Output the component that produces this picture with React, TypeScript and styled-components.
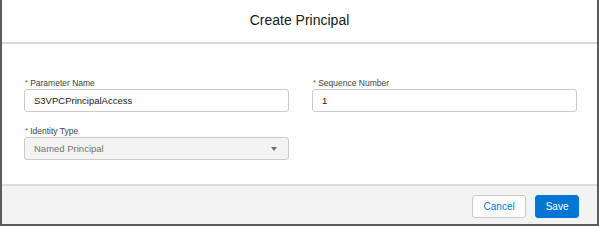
import React from 'react'
import styled, { createGlobalStyle } from 'styled-components'

const GlobalStyle = createGlobalStyle`
  html, body {
    margin: 0;
    padding: 0;
    background: #ffffff;
  }
  body {
    font-family: 'Liberation Sans', Arial, sans-serif;
    color: #181818;
  }
`

const Modal = styled.div`
  box-sizing: border-box;
  width: 599px;
  height: 226px;
  display: flex;
  flex-direction: column;
  background: #ffffff;
  border-left: 2px solid #5b5b5b;
  border-right: 2px solid #5b5b5b;
  border-bottom: 2px solid #5b5b5b;
`

const Header = styled.header`
  box-sizing: border-box;
  height: 44px;
  display: flex;
  align-items: center;
  justify-content: center;
  padding-bottom: 2px;
  border-bottom: 2px solid #d6d6d6;
`

const Title = styled.h2`
  margin: 0;
  font-size: 14px;
  font-weight: 400;
  color: #181818;
`

const Body = styled.div`
  flex: 1;
  display: grid;
  grid-template-columns: 265px 265px;
  column-gap: 23px;
  row-gap: 12px;
  align-content: start;
  padding: 32px 0 0 22px;
`

const Field = styled.div`
  display: flex;
  flex-direction: column;
`

const Label = styled.label`
  display: flex;
  align-items: center;
  height: 13px;
  font-size: 8.5px;
  color: #3e3e3c;
`

const Required = styled.abbr`
  color: #c23934;
  text-decoration: none;
  margin: 0 2px 0 1px;
  font-size: 8px;
`

const Input = styled.div<{ disabled?: boolean }>`
  box-sizing: border-box;
  height: 23px;
  display: flex;
  align-items: center;
  justify-content: space-between;
  padding: 0 11px 0 9px;
  border: 1px solid #c9c9c9;
  border-radius: 3px;
  font-size: 9.5px;
  background: ${props => (props.disabled ? '#f3f3f3' : '#ffffff')};
  color: ${props => (props.disabled ? '#747474' : '#181818')};
`

const Caret = styled.span`
  width: 0;
  height: 0;
  border-left: 3.5px solid transparent;
  border-right: 3.5px solid transparent;
  border-top: 4px solid #706e6b;
`

const Footer = styled.footer`
  box-sizing: border-box;
  height: 40px;
  display: flex;
  align-items: center;
  justify-content: flex-end;
  gap: 9px;
  padding: 3px 18px 0 0;
  background: #f3f3f3;
  border-top: 2px solid #dcdcdc;
`

const Button = styled.button<{ brand?: boolean }>`
  box-sizing: border-box;
  height: 23px;
  margin: 0;
  padding: 0 ${props => (props.brand ? '9.5px' : '10.5px')};
  border-radius: 3px;
  font-family: inherit;
  font-size: 10px;
  cursor: pointer;
  border: 1px solid ${props => (props.brand ? '#0176d3' : '#c9c9c9')};
  background: ${props => (props.brand ? '#0176d3' : '#ffffff')};
  color: ${props => (props.brand ? '#ffffff' : '#0176d3')};
`

export default function App() {
  return (
    <>
      <GlobalStyle />
      <Modal>
        <Header>
          <Title>Create Principal</Title>
        </Header>
        <Body>
          <Field>
            <Label><Required>*</Required>Parameter Name</Label>
            <Input>S3VPCPrincipalAccess</Input>
          </Field>
          <Field>
            <Label><Required>*</Required>Sequence Number</Label>
            <Input>1</Input>
          </Field>
          <Field>
            <Label><Required>*</Required>Identity Type</Label>
            <Input disabled>
              Named Principal
              <Caret />
            </Input>
          </Field>
        </Body>
        <Footer>
          <Button>Cancel</Button>
          <Button brand>Save</Button>
        </Footer>
      </Modal>
    </>
  )
}
